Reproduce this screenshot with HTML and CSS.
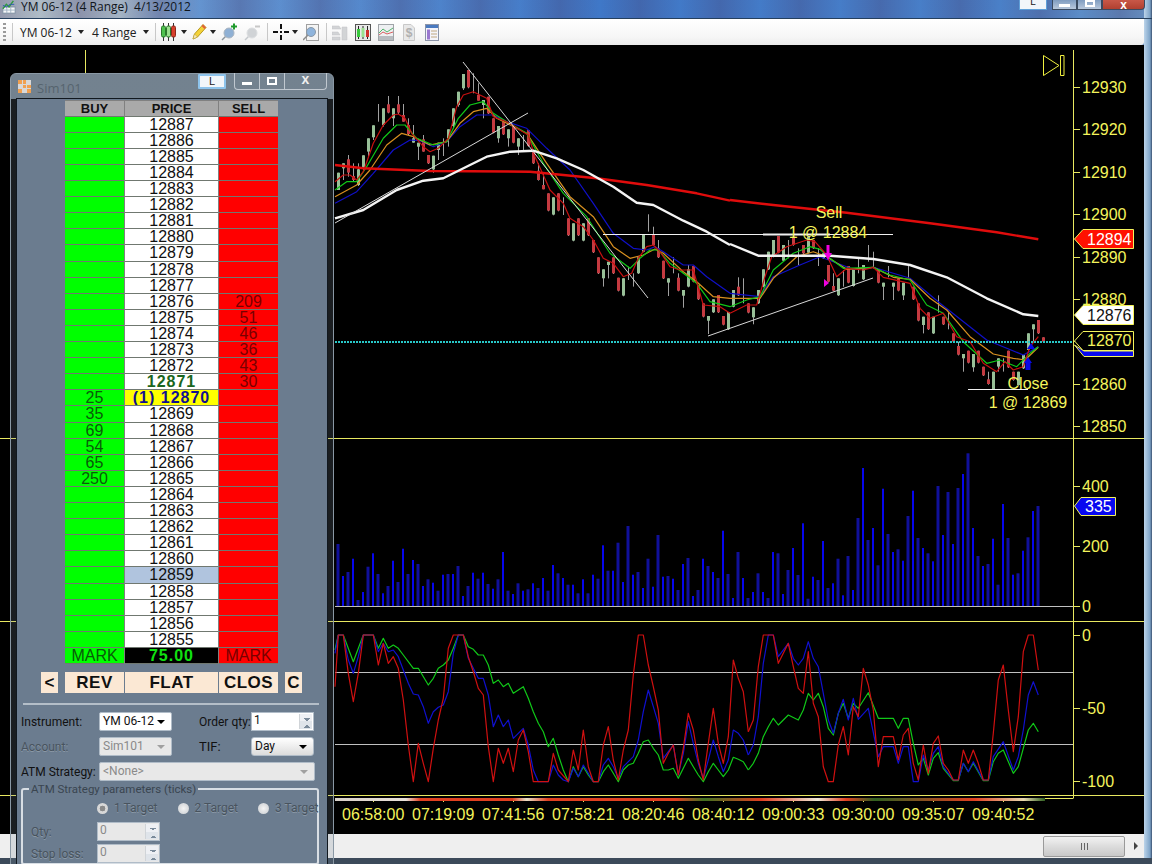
FILE: index.html
```html
<!DOCTYPE html>
<html lang="en">
<head>
    <meta charset="UTF-8">
    <title>YM 06-12 (4 Range) 4/13/2012</title>
    <link rel="stylesheet" href="styles.css">
</head>
<body>
    <div class="chart-window">
        <div class="title-bar">
            <svg class="title-icon" width="14" height="14" viewBox="0 0 16 16">
                <rect x="1" y="8" width="14" height="7" fill="#f4f6f8" stroke="#7c8ea0"/>
                <path d="M1 11.5H15M5.5 8V15M10 8V15" stroke="#9fb0c0" fill="none"/>
                <path d="M1 10L5 5L8 8L13 1" stroke="#2e9a3c" stroke-width="1.6" fill="none"/>
                <path d="M1 6L5 8L9 5L14 5" stroke="#2a5ab0" fill="none"/>
            </svg>
            <span class="title-text">YM 06-12 (4 Range)&nbsp; 4/13/2012</span>
            <div class="caption-btns">
                <span class="link-btn">L</span>
                <span class="cap-btn"><i class="cap-min"></i></span>
                <span class="cap-btn"><i class="cap-max"></i></span>
                <span class="cap-btn cap-close">x</span>
            </div>
        </div>

        <div class="toolbar">
            <span class="grip"></span>
            <span class="sep"></span>
            <span class="tb-label">YM 06-12</span><span class="caret"></span>
            <span class="tb-label range">4 Range</span><span class="caret"></span>
            <span class="sep"></span>
            <svg class="tb-icon" width="15" height="20" viewBox="0 0 15 20">
                <path d="M2.5 1V19M7.5 1V19M12.5 1V19" stroke="#333"/>
                <rect x="0.5" y="4" width="4" height="11" rx="1.5" fill="#4fc24f" stroke="#2c7a2c"/>
                <rect x="5.5" y="4" width="4" height="11" rx="1.5" fill="#9be08f" stroke="#2c7a2c"/>
                <rect x="10.5" y="4" width="4" height="11" rx="1.5" fill="#d8402c" stroke="#8a2a1c"/>
            </svg>
            <span class="caret small"></span>
            <svg class="tb-icon pencil" width="15" height="18" viewBox="0 0 15 18">
                <path d="M1 16L2.5 11L11 1.5L14 4.5L5.500 14Z" fill="#f4d238" stroke="#b89a20"/>
                <path d="M1 16L2.500 11L5.500 14Z" fill="#f4e8c0" stroke="#b89a20" stroke-width=".5"/>
                <path d="M11 1.500L14 4.500L12.500 6L9.500 3Z" fill="#e0603c"/>
            </svg>
            <span class="caret small"></span>
            <svg class="tb-icon pin" width="17" height="18" viewBox="0 0 17 18">
                <path d="M1 17L6 12" stroke="#8a949c" stroke-width="1.500"/>
                <circle cx="8" cy="10" r="5" fill="#8fb0d4" stroke="#a8b4c0"/>
                <path d="M13 0.500V6.500M10 3.500H16" stroke="#1f9a2c" stroke-width="2"/>
            </svg>
            <svg class="tb-icon pin last-pin" width="17" height="18" viewBox="0 0 17 18">
                <path d="M1 17L6 12" stroke="#c4c8cc" stroke-width="1.500"/>
                <circle cx="8" cy="10" r="5" fill="#d0d3d6" stroke="#dcdee0"/>
                <path d="M11 3.500H16" stroke="#c8c8c8" stroke-width="2"/>
            </svg>
            <span class="sep"></span>
            <svg class="tb-icon cross" width="16" height="16" viewBox="0 0 16 16">
                <path d="M0 8H5M11 8H16M8 0V5M8 11V16" stroke="#111" stroke-width="2"/>
                <rect x="7" y="7" width="2" height="2" fill="#111"/>
            </svg>
            <span class="caret small"></span>
            <svg class="tb-icon doc" width="16" height="17" viewBox="0 0 16 17">
                <rect x="3.500" y="0.500" width="12" height="16" fill="#f4f4f4" stroke="#a0a0a0"/>
                <path d="M0 16L5 11" stroke="#8a8a8a" stroke-width="1.500"/>
                <circle cx="8" cy="8" r="4.500" fill="#8fb4dc" stroke="#8a98a6"/>
            </svg>
            <span class="sep"></span>
            <svg class="tb-icon box" width="16" height="17" viewBox="0 0 16 17">
                <path d="M0 2H7L9 5H0ZM0 8H6L8 11H0ZM10 3H15V16H10ZM0 13H8V16H0Z" fill="#d2d4d6" stroke="#c0c2c4" stroke-width=".5"/>
            </svg>
            <svg class="tb-icon box" width="16" height="17" viewBox="0 0 16 17">
                <rect x="0.500" y="0.500" width="15" height="16" fill="#e8e8e8" stroke="#555"/>
                <path d="M3.500 2V15M8 2V15M12.500 2V15" stroke="#222"/>
                <rect x="2" y="5" width="3" height="8" fill="#39c93c"/>
                <rect x="6.500" y="4" width="3" height="9" fill="#9be08f"/>
                <rect x="11" y="6" width="3" height="7" fill="#d0302c"/>
            </svg>
            <svg class="tb-icon box" width="16" height="17" viewBox="0 0 16 17">
                <rect x="0.500" y="0.500" width="15" height="16" fill="#eef0f2" stroke="#a0a4a8"/>
                <rect x="1" y="12" width="14" height="4" fill="#b8bcc0"/>
                <path d="M1 9L5 5L9 8L15 4" stroke="#54b46c" fill="none"/>
                <path d="M1 11L5 8L9 10L15 8" stroke="#d86060" fill="none"/>
            </svg>
            <svg class="tb-icon dollar" width="12" height="17" viewBox="0 0 12 17">
                <path d="M0.500 0.500H8L11.500 4V16.500H0.500Z" fill="#e8e8e8" stroke="#c8c8c8"/>
                <text x="6" y="13" class="dollar-sign">$</text>
            </svg>
            <svg class="tb-icon props" width="14" height="17" viewBox="0 0 14 17">
                <rect x="0.500" y="0.500" width="13" height="16" fill="#f4f4fa" stroke="#8c94a8"/>
                <rect x="1" y="1" width="12" height="3" fill="#4a7ac0"/>
                <rect x="2" y="5.500" width="3" height="10" fill="#9a78d0"/>
                <path d="M6 7H12M6 10H12M6 13H12" stroke="#c0a880"/>
            </svg>
        </div>

        <svg class="chart" width="1144" height="789" viewBox="0 45 1144 789">
            <defs>
                <linearGradient id="tradeStrip">
                    <stop offset="0" stop-color="#d8d0c8"/>
                    <stop offset=".1" stop-color="#e8e0d8"/>
                    <stop offset=".12" stop-color="#e04020"/>
                    <stop offset=".25" stop-color="#e04020"/>
                    <stop offset=".27" stop-color="#e8e0c8"/>
                    <stop offset=".3" stop-color="#e04020"/>
                    <stop offset=".48" stop-color="#e04020"/>
                    <stop offset=".52" stop-color="#407020"/>
                    <stop offset=".6" stop-color="#e04020"/>
                    <stop offset=".68" stop-color="#f0e8d8"/>
                    <stop offset=".72" stop-color="#e04020"/>
                    <stop offset=".76" stop-color="#306020"/>
                    <stop offset=".9" stop-color="#e04020"/>
                    <stop offset=".97" stop-color="#e8d8b0"/>
                    <stop offset="1" stop-color="#306020"/>
                </linearGradient>
            </defs>

            <!-- panel frames and axis -->
            <path class="axis" d="M0 438.500H1144M0 621.500H1144M0 795.500H1144M335 798.500H1073M1073.500 50V798.500M85.500 50V73"/>
            <path class="axis" d="M1073 87.500H1080M1073 129.500H1080M1073 172.500H1080M1073 214.500H1080M1073 257.500H1080M1073 299.500H1080M1073 341.500H1080M1073 384.500H1080M1073 426.500H1080M1073 486.500H1080M1073 546.500H1080M1073 606.500H1080M1073 635.500H1080M1073 708.500H1080M1073 781.500H1080"/>
            <path class="axis" d="M373.500 798V802M443.500 798V802M513.500 798V802M583.500 798V802M653.500 798V802M723.500 798V802M793.500 798V802M863.500 798V802M933.500 798V802M1003.500 798V802"/>
            <rect x="335" y="798" width="710" height="3" fill="url(#tradeStrip)"/>

            <path class="guide" d="M335 606.500H1073M335 672.500H1073M335 744.500H1073"/>

            <g id="volumeBars"></g>
            <g id="candles"></g>
            <g id="averages"></g>
            <g id="oscillator"></g>

            <!-- drawn lines -->
            <path class="trend" d="M463 62L648 298M335 223L528 113M708 336L873 278"/>
            <path class="level" d="M603 234.500H893M968 389.500H1028"/>
            <path class="level thick" d="M763 234.500H830M758 256H830"/>
            <line class="last-price" x1="335" y1="342" x2="1073" y2="342"/>

            <!-- trade markers -->
            <path class="arrow-sell" d="M826.500 245H829.500V253H832L828 260L824 253H826.500Z"/>
            <path class="arrow-sell" d="M824 279L829 283L824 287Z"/>
            <path class="arrow-buy" d="M1028 357L1032 363H1030.500V370H1025.500V363H1024Z"/>
            <path class="arrow-buy" d="M1031 343L1035 349H1027Z"/>

            <path class="jump" d="M1043.500 55.500V75.500L1059 65.500ZM1060.500 55.500H1064V75.500H1060.500Z"/>

            <!-- axis labels -->
            <g class="labels">
                <text x="1082" y="93">12930</text>
                <text x="1082" y="135">12920</text>
                <text x="1082" y="178">12910</text>
                <text x="1082" y="220">12900</text>
                <text x="1082" y="263">12890</text>
                <text x="1082" y="305">12880</text>
                <text x="1082" y="390">12860</text>
                <text x="1082" y="432">12850</text>
                <text x="1082" y="492">400</text>
                <text x="1082" y="552">200</text>
                <text x="1082" y="612">0</text>
                <text x="1082" y="641">0</text>
                <text x="1082" y="714">-50</text>
                <text x="1082" y="787">-100</text>
                <text x="342" y="820">06:58:00</text>
                <text x="412" y="820">07:19:09</text>
                <text x="482" y="820">07:41:56</text>
                <text x="552" y="820">07:58:21</text>
                <text x="622" y="820">08:20:46</text>
                <text x="692" y="820">08:40:12</text>
                <text x="762" y="820">09:00:33</text>
                <text x="832" y="820">09:30:00</text>
                <text x="902" y="820">09:35:07</text>
                <text x="972" y="820">09:40:52</text>
                <text x="829" y="218" class="mid">Sell</text>
                <text x="828" y="238" class="mid">1 @ 12884</text>
                <text x="1028" y="389" class="mid">Close</text>
                <text x="1028" y="408" class="mid">1 @ 12869</text>
            </g>

            <!-- price tags -->
            <path class="tag-blue" d="M1074.500 345L1084 351H1133.500V356.500H1084Z"/>
            <path class="tag tag-red" d="M1074.500 239L1083 229.500H1133.500V248.500H1083Z"/>
            <text class="tag-text light" x="1087" y="245">12894</text>
            <path class="tag tag-white" d="M1074.500 315L1083 305.500H1133.500V324.500H1083Z"/>
            <text class="tag-text dark" x="1087" y="321">12876</text>
            <path class="tag tag-black" d="M1074.500 341L1083 331.500H1133.500V350.500H1083Z"/>
            <text class="tag-text yellow" x="1087" y="346">12870</text>
            <path class="tag tag-volume" d="M1074.500 506L1081 497.500H1115.500V515.500H1081Z"/>
            <text class="tag-text light" x="1085" y="512">335</text>
        </svg>

        <div class="h-scroll">
            <div class="scroll-thumb"><span class="thumb-grip"></span></div>
            <span class="scroll-arrow"></span>
        </div>
    </div>

    <div class="dom-window">
        <div class="dom-title">
            <svg class="dom-icon" width="13" height="13" viewBox="0 0 13 13">
                <rect width="13" height="13" fill="#d8d8d8"/>
                <path d="M0 0H4V4H0ZM5 5H8V8H5ZM9 9H13V13H9ZM5 0H8V4H5ZM9 5H13V8H9ZM0 9H4V13H0Z" fill="#f0a050"/>
            </svg>
            <span class="dom-name">Sim101</span>
            <span class="link-btn dom-link">L</span>
            <div class="dom-caption">
                <span class="dom-cap"><i class="cap-min"></i></span>
                <span class="dom-cap"><i class="cap-max"></i></span>
                <span class="dom-cap wide">x</span>
            </div>
        </div>

        <div class="dom-panel">
            <div class="ladder">
                <div class="row head"><span>BUY</span><span>PRICE</span><span>SELL</span></div>
                <div class="row"><span class="buy"></span><span class="price">12887</span><span class="sell"></span></div>
                <div class="row"><span class="buy"></span><span class="price">12886</span><span class="sell"></span></div>
                <div class="row"><span class="buy"></span><span class="price">12885</span><span class="sell"></span></div>
                <div class="row"><span class="buy"></span><span class="price">12884</span><span class="sell"></span></div>
                <div class="row"><span class="buy"></span><span class="price">12883</span><span class="sell"></span></div>
                <div class="row"><span class="buy"></span><span class="price">12882</span><span class="sell"></span></div>
                <div class="row"><span class="buy"></span><span class="price">12881</span><span class="sell"></span></div>
                <div class="row"><span class="buy"></span><span class="price">12880</span><span class="sell"></span></div>
                <div class="row"><span class="buy"></span><span class="price">12879</span><span class="sell"></span></div>
                <div class="row"><span class="buy"></span><span class="price">12878</span><span class="sell"></span></div>
                <div class="row"><span class="buy"></span><span class="price">12877</span><span class="sell"></span></div>
                <div class="row"><span class="buy"></span><span class="price">12876</span><span class="sell">209</span></div>
                <div class="row"><span class="buy"></span><span class="price">12875</span><span class="sell">51</span></div>
                <div class="row"><span class="buy"></span><span class="price">12874</span><span class="sell">46</span></div>
                <div class="row"><span class="buy"></span><span class="price">12873</span><span class="sell">36</span></div>
                <div class="row"><span class="buy"></span><span class="price">12872</span><span class="sell">43</span></div>
                <div class="row"><span class="buy"></span><span class="price last">12871</span><span class="sell">30</span></div>
                <div class="row"><span class="buy">25</span><span class="price position">(1) 12870</span><span class="sell"></span></div>
                <div class="row"><span class="buy">35</span><span class="price">12869</span><span class="sell"></span></div>
                <div class="row"><span class="buy">69</span><span class="price">12868</span><span class="sell"></span></div>
                <div class="row"><span class="buy">54</span><span class="price">12867</span><span class="sell"></span></div>
                <div class="row"><span class="buy">65</span><span class="price">12866</span><span class="sell"></span></div>
                <div class="row"><span class="buy">250</span><span class="price">12865</span><span class="sell"></span></div>
                <div class="row"><span class="buy"></span><span class="price">12864</span><span class="sell"></span></div>
                <div class="row"><span class="buy"></span><span class="price">12863</span><span class="sell"></span></div>
                <div class="row"><span class="buy"></span><span class="price">12862</span><span class="sell"></span></div>
                <div class="row"><span class="buy"></span><span class="price">12861</span><span class="sell"></span></div>
                <div class="row"><span class="buy"></span><span class="price">12860</span><span class="sell"></span></div>
                <div class="row"><span class="buy"></span><span class="price selected">12859</span><span class="sell"></span></div>
                <div class="row"><span class="buy"></span><span class="price">12858</span><span class="sell"></span></div>
                <div class="row"><span class="buy"></span><span class="price">12857</span><span class="sell"></span></div>
                <div class="row"><span class="buy"></span><span class="price">12856</span><span class="sell"></span></div>
                <div class="row"><span class="buy"></span><span class="price">12855</span><span class="sell"></span></div>
                <div class="row"><span class="buy">MARK</span><span class="price pnl">75.00</span><span class="sell">MARK</span></div>
            </div>

            <div class="actions">
                <button class="act small">&lt;</button>
                <div class="act-group">
                    <button class="act">REV</button>
                    <button class="act">FLAT</button>
                    <button class="act">CLOS</button>
                </div>
                <button class="act small">C</button>
            </div>

            <div class="divider"></div>

            <div class="form-grid">
                <label class="lbl">Instrument:</label>
                <div class="combo"><span>YM 06-12</span><i class="combo-arrow"></i></div>
                <label class="lbl mid-lbl">Order qty:</label>
                <div class="spin"><span>1</span><i class="spin-btns"></i></div>

                <label class="lbl off">Account:</label>
                <div class="combo off"><span>Sim101</span><i class="combo-arrow"></i></div>
                <label class="lbl mid-lbl tif">TIF:</label>
                <div class="combo button"><span>Day</span><i class="combo-arrow"></i></div>

                <label class="lbl">ATM Strategy:</label>
                <div class="combo off full"><span>&lt;None&gt;</span><i class="combo-arrow"></i></div>
            </div>

            <fieldset class="atm-group">
                <legend>ATM Strategy parameters (ticks)</legend>
                <div class="targets">
                    <label class="radio checked"><i></i>1 Target</label>
                    <label class="radio"><i></i>2 Target</label>
                    <label class="radio"><i></i>3 Target</label>
                </div>
                <div class="param"><label class="lbl off">Qty:</label><div class="spin off"><span>0</span><i class="spin-btns"></i></div></div>
                <div class="param"><label class="lbl off">Stop loss:</label><div class="spin off"><span>0</span><i class="spin-btns"></i></div></div>
            </fieldset>
        </div>
    </div>

    <script src="chart.js"></script>
</body>
</html>
```

FILE: styles.css
```css
* {
    box-sizing: border-box;
}
html, body {
    margin: 0;
    height: 100%;
    overflow: hidden;
}
body {
    position: relative;
    width: 1152px;
    height: 864px;
    font-family: "Liberation Sans", Arial, sans-serif;
    background: #3a4a5c;
}

/* main chart window */
.chart-window {
    width: 1152px;
    height: 864px;
    display: flex;
    flex-direction: column;
    padding: 0 8px 6px 0;
    background:
        linear-gradient(to top, #3c4a5a 6px, transparent 6px),
        linear-gradient(to right, transparent 1144px, #bcd4ea 1144px, #7ea4c8 1150px, #3a5070 1152px),
        repeating-linear-gradient(to right, rgba(70, 60, 110, 0) 200px, rgba(70, 60, 110, .3) 240px, rgba(70, 60, 110, 0) 280px),
        linear-gradient(to right, #b4c0c8, #a4b4c4 120px, #6494d0 200px, #3f78c8 600px, #4a80c8 1000px, #6a98c8);
}
.title-bar {
    height: 19px;
    flex: none;
    display: flex;
    align-items: flex-start;
    position: relative;
    border-bottom: 1px solid #26405e;
    margin-right: -8px;
}
.title-icon {
    margin: 0 5px 0 2px;
}
.title-text {
    font-family: "Open Sans", sans-serif;
    font-size: 12px;
    line-height: 14px;
    color: #10161c;
}
.caption-btns {
    position: absolute;
    right: 7px;
    top: 0;
    display: flex;
    align-items: flex-start;
}
.link-btn {
    width: 28px;
    height: 10px;
    margin-right: 5px;
    background: #f2f6fa;
    border: 1px solid #5f9fd8;
    border-top: 0;
    font-size: 10px;
    line-height: 4px;
    text-align: center;
    color: #222;
}
.cap-btn {
    width: 25px;
    height: 10px;
    background: linear-gradient(#7f9cc0, #b8c8dc);
    border: 1px solid #3a4a60;
    border-top: 0;
    display: flex;
    align-items: flex-end;
    justify-content: center;
}
.cap-close {
    width: 43px;
    background: linear-gradient(#c85848, #b04030);
    color: #fff;
    font-size: 12px;
    font-weight: bold;
    line-height: 7px;
    overflow: hidden;
    border-radius: 0 0 4px 0;
}
.cap-min {
    width: 11px;
    height: 3px;
    margin-bottom: 2px;
    background: #fff;
}
.cap-max {
    width: 10px;
    height: 7px;
    margin-bottom: 2px;
    border: 2px solid #fff;
}

.toolbar {
    height: 26px;
    flex: none;
    display: flex;
    align-items: center;
    padding-left: 3px;
    background: linear-gradient(#ffffff, #f6f6f6 70%, #ececec);
    border-radius: 0 0 3px 0;
}
.grip {
    width: 3px;
    height: 18px;
    margin-right: 6px;
    background: repeating-linear-gradient(#9a9a9a 0 2px, transparent 2px 4px);
}
.sep {
    width: 1px;
    height: 18px;
    margin: 0 5px 0 5px;
    background: #c8c8c8;
}
.grip + .sep {
    margin: 0 7px 0 0;
}
.tb-label {
    font-family: "Open Sans", sans-serif;
    font-size: 12px;
    color: #202020;
}
.range {
    margin-left: 8px;
}
.caret {
    width: 0;
    height: 0;
    margin-left: 6px;
    border: 3px solid transparent;
    border-top: 4px solid #222;
    border-bottom: 0;
}
.caret.small {
    margin-left: 3px;
}
.tb-icon {
    display: block;
    flex: none;
    margin-right: 8px;
}
.caret.small + .tb-icon {
    margin-left: 5px;
}
.caret + .sep {
    margin-left: 6px;
}
.toolbar > svg:first-of-type {
    margin-right: 2px;
}
.pencil {
    margin-right: 0;
}
.pin {
    margin-right: 6px;
}
.last-pin {
    margin-right: 1px;
}
.cross {
    margin-right: 0;
}
.doc {
    margin-right: 2px;
}
.box {
    margin-right: 7px;
}
.dollar {
    margin-left: 2px;
    margin-right: 10px;
}
.dollar-sign {
    font-size: 12px;
    font-weight: bold;
    fill: #b0b0b0;
    text-anchor: middle;
}

.chart {
    display: block;
    flex: none;
    background: #000;
}
.axis {
    stroke: #e8e860;
    stroke-width: 1;
    fill: none;
}
.guide {
    stroke: #c0c0c0;
    stroke-width: 1;
    fill: none;
}
.trend {
    stroke: #d8d8d8;
    stroke-width: 1;
    fill: none;
}
.level {
    stroke: #f0f0f0;
    stroke-width: 1;
    fill: none;
}
.level.thick {
    stroke-width: 2;
}
.last-price {
    stroke: #28c8c8;
    stroke-width: 2;
    stroke-dasharray: 2 1;
}
.arrow-sell {
    fill: #f000e0;
}
.arrow-buy {
    fill: #0808e8;
}
.jump {
    fill: none;
    stroke: #f0f040;
    stroke-width: 1;
}
.labels text {
    font-size: 16px;
    fill: #f4f45c;
}
.labels .mid {
    text-anchor: middle;
}
.tag {
    stroke: #f4f45c;
    stroke-width: 1;
}
.tag-red {
    fill: #ff1000;
}
.tag-white {
    fill: #fff;
}
.tag-black {
    fill: #000;
}
.tag-volume {
    fill: #0808f0;
}
.tag-blue {
    fill: #0808f0;
    stroke: #f4f45c;
    stroke-width: 1;
}
.tag-text {
    font-size: 16px;
}
.tag-text.light {
    fill: #fff;
}
.tag-text.dark {
    fill: #111;
}
.tag-text.yellow {
    fill: #f4f45c;
}

.h-scroll {
    height: 24px;
    flex: none;
    display: flex;
    align-items: center;
    justify-content: flex-end;
    background: #efefef;
    padding-right: 1px;
}
.scroll-thumb {
    width: 82px;
    height: 21px;
    margin-right: 9px;
    border: 1px solid #9a9a9a;
    border-radius: 2px;
    background: linear-gradient(#f2f2f2, #dcdcdc 50%, #c8c8c8);
    display: flex;
    align-items: center;
    justify-content: center;
}
.thumb-grip {
    width: 7px;
    height: 7px;
    background: repeating-linear-gradient(to right, #666 0 1px, #ddd 1px 3px);
}
.scroll-arrow {
    width: 0;
    height: 0;
    border: 4px solid transparent;
    border-left: 4px solid #444;
    border-right: 0;
    margin-right: 5px;
}

/* DOM window, floats over the chart */
.dom-window {
    position: absolute;
    left: 10px;
    top: 73px;
    width: 324px;
    height: 800px;
    padding: 0 5px;
    border: 1px solid #8a98a4;
    border-radius: 6px 6px 0 0;
    background: linear-gradient(rgba(122, 138, 152, .94) 25px, rgba(120, 136, 150, .22) 25px);
}
.dom-title {
    height: 24px;
    display: flex;
    align-items: flex-start;
    position: relative;
}
.dom-icon {
    margin: 6px 6px 0 2px;
}
.dom-name {
    margin-top: 5px;
    font-family: "Open Sans", sans-serif;
    font-size: 13px;
    color: #56646e;
}
.dom-link {
    position: absolute;
    left: 182px;
    top: 0;
    height: 15px;
    margin: 0;
    border: 2px solid #8ec4ec;
    border-radius: 1px;
    font-size: 11px;
    line-height: 11px;
}
.dom-caption {
    position: absolute;
    right: 1px;
    top: -1px;
    height: 17px;
    display: flex;
    border: 1px solid #c0c8d0;
    border-top: 0;
    border-radius: 0 0 4px 4px;
}
.dom-cap {
    width: 25px;
    border-right: 1px solid #c0c8d0;
    display: flex;
    align-items: center;
    justify-content: center;
    color: #f0f0f0;
    font-size: 14px;
    font-weight: bold;
}
.dom-cap.wide {
    width: 41px;
    border-right: 0;
    padding-bottom: 4px;
}
.dom-cap .cap-min {
    margin: 5px 0 0;
    width: 10px;
    height: 3px;
}
.dom-cap .cap-max {
    margin: 0;
    width: 10px;
    height: 8px;
}
.dom-panel {
    height: 800px;
    padding-top: 1px;
    background: #6b7c8f;
    border: 1px solid #11181f;
    border-bottom: 0;
}

.ladder {
    width: 213px;
    margin-left: 48px;
    background: #808080;
    display: flex;
    flex-direction: column;
    border-top: 1px solid #808080;
}
.row {
    height: 16px;
    display: grid;
    grid-template-columns: 59px 93px 59px;
    column-gap: 1px;
    font-size: 16px;
    line-height: 16px;
    text-align: center;
}
/* the real row pitch is a bit over 16px */
.row:nth-child(10n) {
    height: 17px;
}
.row span {
    overflow: hidden;
    border-bottom: 1px solid #707870;
}
.head {
    background: #808080;
    font-size: 13px;
    font-weight: bold;
    color: #111;
}
.head span {
    background: #a9a9a9;
}
.buy {
    background: #00ff00;
    color: #0a5a0a;
}
.sell {
    background: #ff0000;
    color: #780000;
}
.price {
    background: #fff;
    color: #111;
}
.price.last {
    font-weight: bold;
    color: #1a6620;
    letter-spacing: 1px;
}
.price.position {
    background: #ffff00;
    font-weight: bold;
    color: #101090;
    letter-spacing: 1px;
}
.price.selected {
    background: #b0c4de;
}
.price.pnl {
    background: #000;
    font-weight: bold;
    color: #10e010;
    letter-spacing: 1px;
}

.actions {
    display: flex;
    justify-content: flex-start;
    align-items: flex-start;
    margin: 8px 0 0 24px;
}
.act-group {
    display: grid;
    grid-template-columns: 59px 93px 59px;
    column-gap: 1px;
    margin: 0 7px;
}
.act {
    height: 21px;
    padding: 0;
    border: 0;
    background: #fbe8d4;
    font-family: "Liberation Sans", Arial, sans-serif;
    font-size: 17px;
    font-weight: bold;
    letter-spacing: .5px;
    color: #101010;
}
.act.small {
    width: 17px;
    letter-spacing: 0;
}
.divider {
    height: 2px;
    margin: 10px 8px 7px 6px;
    background: #b4bec8;
}

.form-grid {
    display: grid;
    grid-template-columns: 78px 73px 79px 63px;
    grid-auto-rows: 19px;
    row-gap: 6px;
    margin-left: 4px;
    align-items: center;
}
.lbl {
    font-family: Roboto, sans-serif;
    font-size: 12px;
    color: #111;
    white-space: nowrap;
}
.lbl.off {
    color: #48535e;
    text-shadow: 0 1px 0 #8a98a6;
}
.mid-lbl {
    padding-left: 27px;
}
.tif {
    font-size: 13px;
}
.combo {
    height: 19px;
    position: relative;
    background: #fff;
    border: 1px solid #b0bcc8;
    border-radius: 2px;
    padding: 0 3px;
    font-family: Roboto, sans-serif;
    font-size: 12px;
    line-height: 17px;
    color: #111;
}
.combo.off {
    background: #e8e8e8;
    color: #8a8a8a;
}
.combo.full {
    grid-column: 2 / span 3;
    margin-right: -1px;
}
.combo.button {
    background: linear-gradient(#fff, #dcdcdc);
    border-radius: 3px;
}
.combo-arrow {
    position: absolute;
    right: 6px;
    top: 7px;
    width: 0;
    height: 0;
    border: 4px solid transparent;
    border-top: 4px solid #000;
    border-bottom: 0;
}
.combo.off .combo-arrow {
    border-top-color: #a0a0a0;
}
.spin {
    height: 19px;
    position: relative;
    background: #fff;
    border: 1px solid #b0bcc8;
    padding: 0 2px;
    font-family: Roboto, sans-serif;
    font-size: 12px;
    line-height: 14px;
    color: #111;
}
.spin.off {
    width: 63px;
    background: #e8e8e8;
    color: #8a8a8a;
}
.spin-btns {
    position: absolute;
    right: 1px;
    top: 1px;
    bottom: 1px;
    width: 13px;
    background:
        linear-gradient(45deg, transparent 50%, #7a8a9a 50%) 4px 4px / 3px 3px no-repeat,
        linear-gradient(-45deg, transparent 50%, #7a8a9a 50%) 7px 4px / 3px 3px no-repeat,
        linear-gradient(135deg, transparent 50%, #7a8a9a 50%) 4px 11px / 3px 3px no-repeat,
        linear-gradient(-135deg, transparent 50%, #7a8a9a 50%) 7px 11px / 3px 3px no-repeat,
        linear-gradient(#eef0f4 50%, #dfe4ea 50%);
    border-left: 1px solid #d0d4d8;
}

.atm-group {
    margin: 1px 8px 0 4px;
    padding: 0 8px;
    border: 2px solid #d8dee4;
    border-radius: 3px;
    min-width: 0;
}
.atm-group legend {
    padding: 0 2px;
    margin-left: -2px;
    font-family: Roboto, sans-serif;
    font-size: 11.5px;
    line-height: 14px;
    color: #3a4550;
    white-space: nowrap;
}
.targets {
    display: flex;
    gap: 20px;
    margin: 5px 0 0 66px;
}
.radio {
    display: flex;
    align-items: center;
    gap: 6px;
    font-family: Roboto, sans-serif;
    font-size: 12px;
    color: #48535e;
    text-shadow: 0 1px 0 #8a98a6;
    white-space: nowrap;
}
.radio i {
    width: 11px;
    height: 11px;
    border-radius: 50%;
    background: radial-gradient(#f4f4f4, #c8ccd0);
}
.radio.checked i {
    background: radial-gradient(#8a8a8a 35%, #d8d8d8 40%);
}
.param {
    display: flex;
    align-items: center;
    height: 19px;
    margin-top: 3px;
}
.targets + .param {
    margin-top: 7px;
}
.param .lbl {
    width: 66px;
}
```

FILE: chart.js
```js
// Chart data was read off the screenshot at 3x, so every series below
// keeps those coordinates and gets mapped back with an origin.
const SVG_NS = 'http://www.w3.org/2000/svg';

function addShape(parent, tag, attrs) {
    const el = document.createElementNS(SVG_NS, tag);
    Object.keys(attrs).forEach(key => el.setAttribute(key, attrs[key]));
    parent.appendChild(el);
    return el;
}

function addLine(parent, points, originX, originY, color, width) {
    let d = '';
    for (let i = 0; i < points.length; i += 2) {
        const x = originX + points[i] / 3;
        const y = originY + points[i + 1] / 3;
        d += (i ? 'L' : 'M') + x.toFixed(1) + ' ' + y.toFixed(1);
    }
    addShape(parent, 'path', { d: d, fill: 'none', stroke: color, 'stroke-width': width, 'stroke-linejoin': 'round' });
}

// ---- volume, one bar top per 5px slot, baseline at 3x y 498
const VOLUME_TOPS = [
    312,408,396,356,480,456,380,340,402,460,438,362,426,326,402,360,372,438,418,428,
    452,404,402,402,378,468,438,398,416,398,432,446,418,336,452,462,430,452,448,430,
    444,414,452,375,400,414,434,434,460,418,460,404,416,316,392,392,308,426,258,404,
    396,444,356,440,285,410,408,416,450,372,354,468,450,356,378,396,414,272,402,
    474,336,414,474,456,400,456,474,336,340,462,390,324,405,250,476,410,420,303,444,
    430,356,466,348,450,234,84,300,264,376,146,282,336,328,362,228,152,294,324,340,
    364,138,285,156,312,144,102,40,264,348,378,372,296,434,192,294,404,400,332,292,
    213,198
];

const volumeBars = document.getElementById('volumeBars');
VOLUME_TOPS.forEach((top, i) => {
    const bright = i % 2 === 1;
    const width = bright ? 2 : 3;
    const y = 440 + top / 3;
    addShape(volumeBars, 'rect', {
        x: 338 + 5 * i - width / 2,
        y: y.toFixed(1),
        width: width,
        height: (606 - y).toFixed(1),
        fill: bright ? '#0606ee' : '#10109a'
    });
});

// ---- candles: [type, bodyTop, bodyBottom, wickTop, wickBottom]
// r = down, g = up, d = doji (wick only)
const CANDLES_LEFT = [
    ['g',368,420,368,420],['g',340,355,340,390],['r',328,368,315,380],['r',378,390,340,395],['g',358,405,340,408],
    ['g',316,352,316,360],['g',265,305,265,320],['g',226,262,226,270],['d',0,0,162,215],['g',175,225,175,230],
    ['r',163,188,138,190],['g',175,205,175,228],['r',163,188,138,192],['r',195,215,162,215],['r',225,252,205,255],
    ['g',265,278,225,278],['g',278,290,278,330],['r',268,305,255,305],['r',315,340,315,342],['g',317,358,317,368],
    ['g',278,300,278,330],['d',0,0,265,318],['g',238,265,238,290],['g',175,228,175,235],['g',125,165,125,170],
    ['g',72,115,72,120],['r',60,112,60,115],['d',0,0,70,130],['r',135,152,100,152],['g',150,165,150,205],
    ['r',140,190,140,192],['r',205,248,205,250],['g',228,265,228,278],['r',215,253,215,255],['g',238,265,238,290],
    ['r',228,278,228,280],['g',265,290,265,315],['d',0,0,255,300],['r',240,288,240,290],['r',300,340,300,342],
    ['r',362,390,340,392],['r',405,418,370,418],['r',430,482,430,484],['g',442,494,442,496],['r',430,482,430,484],
    ['d',0,0,442,495],['r',505,556,505,558],['g',520,572,520,574],['r',505,556,505,558],['g',520,572,520,574],
    ['r',505,556,505,558],['r',570,607,570,609],['r',622,670,622,672],['g',658,685,658,710],['g',635,645,635,685],
    ['r',622,670,622,672],['r',683,722,683,724],['g',685,737,685,739],['d',0,0,650,690],['d',0,0,670,710],
    ['g',622,670,622,672],['g',555,605,555,607],['d',0,0,493,545],['r',555,585,530,587],['r',595,622,570,624],
    ['r',632,685,632,687],['g',685,698,685,738],['d',0,0,622,670],['r',683,722,670,724],['g',720,737,720,773],
    ['g',658,710,645,712],['r',648,695,648,697],['r',705,748,705,750],['r',760,800,760,802],['g',798,812,798,852],
    ['g',748,787,748,789],['r',735,787,735,789],['r',798,824,798,826],['g',786,838,786,840]
];
const CANDLES_RIGHT = [
    ['g',300,350,300,352],['r',290,316,262,318],['d',0,0,265,340],['r',340,368,340,370],['g',352,382,352,403],
    ['g',300,340,300,342],['g',238,290,238,292],['g',185,238,185,240],['g',150,200,150,202],['r',138,188,138,190],
    ['g',165,212,165,214],['d',0,0,150,205],['r',140,165,140,167],['d',0,0,175,225],['r',165,190,165,192],
    ['g',140,188,140,190],['r',150,175,150,177],['d',0,0,175,228],['g',190,205,190,207],['r',225,275,225,277],
    ['r',288,302,250,304],['g',265,316,265,318],['d',0,0,240,290],['r',228,278,228,280],['g',238,288,238,290],
    ['d',0,0,205,250],['g',225,268,225,270],['d',0,0,165,215],['d',0,0,185,235],['r',240,278,240,280],
    ['g',278,290,278,330],['d',0,0,228,262],['g',278,290,278,330],['r',265,302,265,304],['g',278,316,278,330],
    ['d',0,0,228,265],['r',290,328,290,330],['r',340,392,340,394],['g',380,405,380,430],['r',367,418,367,420],
    ['g',380,430,380,432],['d',0,0,316,368],['r',380,403,380,405],['d',0,0,367,418],['r',430,455,430,457],
    ['r',468,494,455,496],['g',492,505,492,545],['r',482,518,482,520],['g',492,532,492,545],['r',482,518,482,520],
    ['r',530,556,530,558],['r',568,582,545,584],['g',545,597,545,599],['g',505,530,505,545],['d',0,0,505,545],
    ['r',482,532,482,534],['r',545,570,545,572],['g',545,585,545,587],['g',495,535,495,537],['g',430,480,430,482],
    ['g',403,418,403,455],['r',390,430,390,432],['r',442,455,442,457]
];

const candles = document.getElementById('candles');
function drawCandles(list, firstIndex, originY) {
    list.forEach((c, i) => {
        const x = 338 + 5 * (firstIndex + i);
        const wickTop = originY + c[3] / 3;
        const wickBottom = originY + c[4] / 3;
        addShape(candles, 'rect', { x: x, y: wickTop.toFixed(1), width: 1, height: (wickBottom - wickTop).toFixed(1), fill: '#a0a0a0' });
        if (c[0] !== 'd') {
            const top = originY + c[1] / 3;
            addShape(candles, 'rect', {
                x: x - 1,
                y: top.toFixed(1),
                width: 3,
                height: ((c[2] - c[1]) / 3).toFixed(1),
                fill: c[0] === 'r' ? '#c43a40' : '#98c098'
            });
        }
    });
}
drawCandles(CANDLES_LEFT, 0, 50);
drawCandles(CANDLES_RIGHT, 79, 190);

// ---- moving averages
const averages = document.getElementById('averages');
const MA_BLUE_L = [15,460,80,425,130,370,190,300,240,270,270,272,310,290,350,275,390,230,440,195,490,195,530,215,590,235,650,295,720,360,790,460,850,550,910,595,950,600,975,590,1000,605,1060,645,1090,645,1130,680,1200,730];
const MA_BLUE_R = [0,310,90,320,130,260,210,225,270,200,310,215,370,238,430,232,540,265,630,340,770,450,880,495,925,470];
const MA_ORANGE_L = [15,440,80,405,120,360,170,285,215,250,250,260,300,285,350,275,390,220,430,185,470,175,500,205,590,250,650,340,720,440,790,500,850,590,900,625,940,615,975,597,1000,610,1060,665,1100,695,1150,740,1200,745];
const MA_ORANGE_R = [0,325,90,325,130,265,200,200,250,185,290,200,350,238,430,232,490,262,540,268,600,325,650,360,720,440,790,492,850,505,885,510,925,472];
const MA_GREEN_L = [15,420,50,395,80,395,110,350,160,265,200,225,225,225,260,265,310,285,350,275,385,205,420,165,460,155,490,190,530,215,590,250,640,340,700,430,770,500,840,610,900,655,930,625,960,600,985,600,1020,640,1060,670,1100,700,1140,755,1200,770];
const MA_GREEN_R = [0,350,50,330,90,320,130,240,190,190,240,170,270,178,300,205,340,235,430,232,480,255,540,270,590,345,640,370,700,455,770,520,810,510,860,530,900,490,925,470];
const MA_RED_L = [15,395,40,375,60,375,80,390,100,365,130,280,160,225,190,195,205,192,225,205,245,250,280,290,300,305,325,295,355,265,380,170,400,135,430,125,470,145,490,200,530,215,570,240,595,255,615,320,640,375,660,420,700,460,720,505,760,530,790,570,820,625,850,640,880,680,905,670,925,625,950,590,970,585,990,605,1020,650,1050,660,1090,660,1120,765,1170,770,1200,790];
const MA_RED_R = [0,370,50,345,80,345,105,260,125,200,170,170,230,150,255,155,290,195,320,260,350,235,400,240,430,232,460,262,540,280,570,355,600,385,640,370,680,440,720,455,760,520,800,545,825,515,850,540,880,530,900,470,925,440];
const MA_WHITE = [15,505,100,480,200,420,280,392,340,385,420,345,470,320,540,305,610,302,680,325,760,360,850,410,920,458,970,465,1060,512,1130,545,1200,585];
const MA_WHITE_R = [0,162,85,197,215,197,300,197,430,207,540,225,650,262,770,325,880,373,925,378];
const MA_SLOW = [15,345,100,355,300,363,600,365,800,385,950,405,1100,430,1200,452];
const MA_SLOW_R = [0,30,130,45,350,68,600,100,800,127,925,148];

[[MA_BLUE_L, MA_BLUE_R, '#1010c8'], [MA_ORANGE_L, MA_ORANGE_R, '#d89020'], [MA_GREEN_L, MA_GREEN_R, '#10c818'], [MA_RED_L, MA_RED_R, '#c81010']].forEach(m => {
    addLine(averages, m[0], 330, 50, m[2], 1.2);
    addLine(averages, m[1], 730, 190, m[2], 1.2);
});
addLine(averages, MA_SLOW, 330, 50, '#e00c0c', 2.4);
addLine(averages, MA_SLOW_R, 730, 190, '#e00c0c', 2.4);
addLine(averages, MA_WHITE, 330, 50, '#f4f4f4', 2.4);
addLine(averages, MA_WHITE_R, 730, 190, '#f4f4f4', 2.4);

// ---- oscillator panel
const oscillator = document.getElementById('oscillator');
const OSC_GREEN_L = [15,90,25,45,40,45,70,125,100,45,130,45,145,85,160,55,175,85,190,75,205,85,220,105,250,145,265,145,295,195,310,175,325,145,340,135,355,120,370,85,385,45,400,45,415,80,430,88,445,105,460,105,475,135,490,190,505,180,520,200,535,190,550,220,580,200,595,235,610,275,625,310,640,335,655,380,670,355,685,405,700,450,715,485,730,440,745,470,760,440,775,465,790,485,805,485,820,455,835,435,850,460,865,485,880,450,895,435,910,430,925,400,940,365,955,360,970,385,985,405,1000,450,1015,450,1030,445,1045,475,1060,445,1075,415,1090,440,1105,465,1120,485,1135,455,1150,430,1165,450,1180,470,1195,450,1210,412,1225,418,1240,425,1255,450];
const OSC_GREEN_R = [25,450,40,430,55,400,70,350,85,320,100,295,115,315,145,285,175,300,190,270,205,220,220,240,235,220,250,260,265,325,280,345,295,280,310,250,325,295,340,250,355,265,385,218,415,295,460,295,475,325,490,295,505,295,520,370,535,435,550,415,565,465,580,415,595,398,610,445,640,482,655,482,670,430,685,455,700,430,730,482,745,482,760,425,775,400,790,390,820,460,835,440,850,385,865,330,880,310,895,335];
const OSC_BLUE_L = [15,100,25,45,40,45,55,120,70,160,85,110,100,45,130,45,145,95,160,70,175,95,190,90,205,110,220,150,235,190,250,222,265,225,280,260,295,310,310,275,325,262,340,255,355,215,370,100,385,45,400,45,415,115,445,175,460,175,475,225,490,320,505,285,520,320,535,300,550,355,565,340,580,325,595,375,610,450,625,485,655,485,670,435,685,465,700,480,715,485,730,445,745,470,760,435,775,460,790,485,805,485,820,435,835,415,850,440,865,475,880,440,895,425,910,410,925,360,940,275,955,210,970,260,985,310,1000,415,1015,395,1030,375,1045,465,1060,400,1075,305,1090,370,1105,430,1120,475,1135,420,1150,360,1165,410,1180,455,1195,420,1210,330,1225,340,1240,360,1255,405];
const OSC_BLUE_R = [25,405,40,375,55,290,70,130,85,45,100,45,115,110,145,70,160,115,175,135,190,115,205,65,220,115,235,140,250,220,265,300,280,340,295,280,310,238,325,300,340,235,355,298,385,265,415,410,430,380,460,380,475,430,490,380,505,380,520,485,535,485,550,405,565,450,580,400,595,380,610,440,640,480,655,480,670,430,685,455,700,425,730,480,745,480,760,410,790,365,820,450,835,410,850,330,865,225,880,185,895,225];
const OSC_RED_L = [15,200,25,45,40,45,55,160,70,245,85,160,100,45,130,45,145,135,160,70,175,130,190,110,205,145,220,240,235,375,250,485,265,370,280,430,295,485,310,385,325,300,340,235,355,85,370,45,400,45,415,110,430,155,445,205,460,225,475,380,490,485,505,385,520,430,535,385,550,455,565,360,580,330,595,395,610,485,655,485,670,400,685,450,715,485,730,390,745,450,760,330,775,440,790,485,805,485,820,375,835,320,850,420,865,480,880,390,895,330,910,165,925,45,940,45,955,135,970,200,985,270,1000,430,1015,400,1030,375,1045,465,1060,385,1075,280,1090,330,1105,420,1120,480,1135,370,1150,265,1165,370,1180,430,1195,350,1210,120,1225,175,1240,215,1255,335];
const OSC_RED_R = [25,335,40,300,55,140,70,45,100,45,115,130,145,70,160,140,175,205,190,220,205,95,220,250,235,290,250,440,265,485,280,485,295,375,310,320,325,405,340,260,355,290,370,145,385,195,400,270,415,440,430,350,460,350,475,420,490,345,505,325,520,430,535,480,550,375,565,460,580,370,595,348,610,430,625,450,640,480,655,480,670,390,685,430,700,390,715,430,730,480,745,480,760,340,775,180,790,135,805,270,820,395,835,290,850,95,865,45,880,45,895,150];

addLine(oscillator, OSC_GREEN_L, 330, 620, '#10c818', 1.2);
addLine(oscillator, OSC_GREEN_R, 740, 620, '#10c818', 1.2);
addLine(oscillator, OSC_BLUE_L, 330, 620, '#1010d0', 1.2);
addLine(oscillator, OSC_BLUE_R, 740, 620, '#1010d0', 1.2);
addLine(oscillator, OSC_RED_L, 330, 620, '#d01010', 1.2);
addLine(oscillator, OSC_RED_R, 740, 620, '#d01010', 1.2);
```
